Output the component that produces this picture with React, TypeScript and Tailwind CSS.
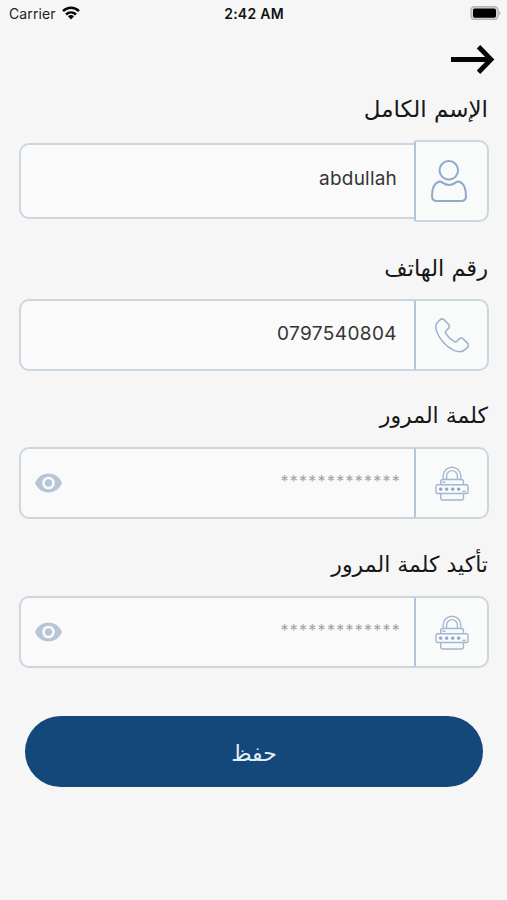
import React, { useState } from 'react';

interface FieldProps {
  id: string;
  label: string;
  labelClass: string;
  boxClass: string;
  cellClass: string;
  icon: React.ReactNode;
  children: React.ReactNode;
}

const UserIcon = () => (
  <svg className="w-9 h-[42px] -ml-[5px]" viewBox="0 0 36 42" fill="none" stroke="#8faac8" strokeWidth="2">
    <circle cx="17.8" cy="10.3" r="9.3" />
    <path d="M7.500 21.800C3 23.500 1 29.500 1 36c0 3.500 1.500 5 4.800 5h24.400c3.300 0 4.800-1.500 4.800-5 0-6.500-2-12.500-6.500-14.200-1.500-.5-2.600-.2-4 .8-4 2.900-9 2.900-13 0-1.400-1-2.500-1.300-4-.8z" />
  </svg>
);

const PhoneIcon = () => (
  <svg className="w-[34px] h-[35px]" viewBox="0 0 34 35" fill="none" stroke="#9db2d0" strokeWidth="1.5" strokeLinejoin="round">
    <path d="M2.300 4.600 4.900 1.900c1.400-1.300 3-1.300 4.300 0l4.200 4.300c1.300 1.400 1.300 2.900 0 4.200l-2.300 2.300c-.9.900-1 1.600-.4 2.700 2.100 3.500 5 6.200 8.700 8.200 1 .5 1.700.4 2.500-.4l2.100-2.100c1.400-1.400 3-1.400 4.400 0l4.100 4c1.300 1.300 1.300 2.800 0 4.100l-2.200 2.200c-2.500 2.500-6.500 3.100-11.300 1C11 28.900 4 21 1.400 12.600c-1.100-3.700-.8-6.300.9-8z" />
  </svg>
);

const LockIcon = () => (
  <svg className="w-[34px] h-[35px]" viewBox="0 0 34 35" fill="none" stroke="#a3b7d2" strokeWidth="1.4" strokeLinejoin="round">
    <path d="M8.200 13.500V10a8.800 8.800 0 0 1 17.600 0v3.500M11.600 13.500V10a5.400 5.400 0 0 1 10.800 0v3.500" />
    <path d="M5.700 18.800v-3c0-1.500.8-2.300 2.300-2.300h18.200c1.500 0 2.300.8 2.300 2.300v3M7.500 16.200h3" />
    <rect x="1" y="18.800" width="32" height="8.700" rx="1.500" />
    <path d="M5.700 27.500v4.300c0 1.500.8 2.200 2.300 2.200h18.200c1.500 0 2.300-.7 2.300-2.200v-4.300" />
    <path d="M5.700 21.500v3.200m-1.500-2.400 3 1.600m0-1.600-3 1.600M11.700 21.500v3.200m-1.500-2.400 3 1.600m0-1.600-3 1.600M17.700 21.500v3.200m-1.500-2.400 3 1.600m0-1.600-3 1.600M23.700 21.500v3.200m-1.500-2.400 3 1.600m0-1.600-3 1.600" stroke="#8fa7c7" />
    <path d="M27.300 25.400h3.400" />
  </svg>
);

const EyeIcon = () => (
  <svg className="w-[27px] h-5" viewBox="0 0 27 20">
    <path d="M0 10C2.300 4.200 7.400.5 13.500.5S24.700 4.200 27 10c-2.300 5.800-7.400 9.500-13.500 9.500S2.300 15.800 0 10z" fill="#b7c5d7" />
    <circle cx="13.500" cy="10" r="5" fill="#b7c5d7" stroke="#fafbfc" strokeWidth="2.600" />
  </svg>
);

const Field: React.FC<FieldProps> = ({ id, label, labelClass, boxClass, cellClass, icon, children }) => (
  <div className="flex flex-col">
    <label
      htmlFor={id}
      dir="rtl"
      className={`block h-[50px] whitespace-nowrap pr-px text-[#171717] font-['DejaVu_Sans','Noto_Sans',sans-serif] leading-[38px] ${labelClass}`}
    >
      {label}
    </label>
    <div className="flex items-center">
      <div className={`flex flex-1 min-w-0 items-center rounded-l-[10px] border-2 border-r-0 border-[#ccd6e1] bg-[#fafafa] ${boxClass}`}>
        {children}
      </div>
      <div className={`flex w-[75px] shrink-0 items-center justify-center rounded-r-[10px] border-2 border-[#ccd6e1] border-l-[#b3c5d9] bg-[#f9fafa] ${cellClass}`}>
        {icon}
      </div>
    </div>
  </div>
);

const PasswordInput: React.FC<{ id: string }> = ({ id }) => {
  const [visible, setVisible] = useState(false);

  return (
    <>
      <button type="button" className="ml-[14px] shrink-0" onClick={() => setVisible(!visible)}>
        <EyeIcon />
      </button>
      <input
        id={id}
        type={visible ? 'text' : 'password'}
        placeholder="*************"
        className="h-full w-full min-w-0 flex-1 bg-transparent pb-[5px] pr-[13px] text-right text-[16px] tracking-[1.25px] placeholder:text-[#a4a4a4] outline-none"
      />
    </>
  );
};

const App: React.FC = () => {
  const [name, setName] = useState('abdullah');
  const [phone, setPhone] = useState('0797540804');

  return (
    <div className="flex h-[900px] w-[507px] flex-col overflow-hidden bg-[#f6f6f6] font-['Inter','Liberation_Sans',sans-serif]">
      <header className="grid h-7 shrink-0 grid-cols-3 items-center pb-[2px] pl-[9px] pr-[6px] text-[14px] text-[#222222]">
        <div className="flex items-center gap-[6px]">
          <span className="tracking-[0.1px]">Carrier</span>
          <svg className="h-[14px] w-[18px] -mt-px" viewBox="0 0 18 14" fill="none" stroke="#080808" strokeWidth="2.500">
            <path d="M1 5.200c4.600-4.500 11.400-4.500 16 0M4 8.500c2.900-2.800 7.100-2.800 10 0" />
            <path d="m5.900 10.200 3.100 3.200 3.100-3.200c-1.800-1.600-4.400-1.600-6.200 0z" fill="#080808" stroke="none" />
          </svg>
        </div>
        <span className="-ml-[2px] text-center font-semibold tracking-[0.25px] text-[#111111]">2:42 AM</span>
        <svg className="h-[14px] w-[31px] justify-self-end" viewBox="0 0 31 14">
          <rect x="1" y=".7" width="27" height="12.800" rx="3.500" fill="#d8d8d8" stroke="#b4b4b4" strokeWidth="1.400" />
          <rect x="3" y="2.500" width="23" height="9.200" rx="1.800" fill="#000000" />
          <path d="M29 5c2 .8 2 3.400 0 4.200z" fill="#b4b4b4" />
        </svg>
      </header>

      <div className="flex h-[62px] shrink-0 justify-end pr-3 pt-[17px]">
        <button type="button" className="h-[29px]">
          <svg className="h-[29px] w-[45px]" viewBox="0 0 45 29" fill="none" stroke="#050505" strokeWidth="4.800">
            <path d="M1 14.500h40M28.500 1.800l12.500 12.700-12.500 12.700" />
          </svg>
        </button>
      </div>

      <form className="flex flex-col pl-[19px] pr-[18px]" onSubmit={(e) => e.preventDefault()}>
        <Field id="name" label="الإسم الكامل" labelClass="text-[23px]" boxClass="h-[76px]" cellClass="h-[82px] rounded-l-[2px]" icon={<UserIcon />}>
          <input
            id="name"
            value={name}
            onChange={(e) => setName(e.target.value)}
            className="h-full w-full bg-transparent pb-[6px] pr-[17px] text-right text-[19px] tracking-[0.2px] text-[#353535] outline-none"
          />
        </Field>
        <div className="h-[27px]" />
        <Field id="phone" label="رقم الهاتف" labelClass="text-[22.5px]" boxClass="h-[72px]" cellClass="h-[72px]" icon={<PhoneIcon />}>
          <input
            id="phone"
            value={phone}
            onChange={(e) => setPhone(e.target.value)}
            className="h-full w-full bg-transparent pb-[4px] pr-[17px] text-right text-[19px] tracking-[0.4px] text-[#353535] outline-none"
          />
        </Field>
        <div className="h-[26px]" />
        <Field id="password" label="كلمة المرور" labelClass="text-[22px]" boxClass="h-[72px]" cellClass="h-[72px]" icon={<LockIcon />}>
          <PasswordInput id="password" />
        </Field>
        <div className="h-[27px]" />
        <Field id="confirm" label="تأكيد كلمة المرور" labelClass="text-[22px]" boxClass="h-[72px]" cellClass="h-[72px]" icon={<LockIcon />}>
          <PasswordInput id="confirm" />
        </Field>

        <button
          type="submit"
          dir="rtl"
          className="ml-[6px] mr-[6px] mt-12 h-[71px] rounded-full bg-[#14477a] pt-1 font-['DejaVu_Sans','Noto_Sans',sans-serif] text-[22px] text-[#e1edf8]"
        >
          حفظ
        </button>
      </form>
    </div>
  );
};

export default App;
